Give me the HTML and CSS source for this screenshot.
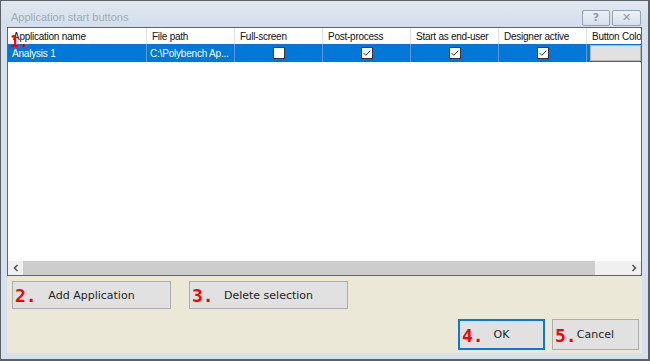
FILE: index.html
```html
<!DOCTYPE html>
<html lang="en">
<head>
    <meta charset="utf-8">
    <title>Application start buttons</title>
    <link rel="stylesheet" href="styles.css">
</head>
<body>
    <div class="window">
        <div class="titlebar">
            <span class="title">Application start buttons</span>
            <div class="caption-buttons">
                <span class="caption-btn">?</span>
                <span class="caption-btn">&#x2715;</span>
            </div>
        </div>
        <div class="client">
            <div class="grid">
                <div class="grid-line grid-header">
                    <div class="cell">Application name</div>
                    <div class="cell">File path</div>
                    <div class="cell">Full-screen</div>
                    <div class="cell">Post-process</div>
                    <div class="cell">Start as end-user</div>
                    <div class="cell">Designer active</div>
                    <div class="cell">Button Color</div>
                </div>
                <div class="grid-line grid-row selected">
                    <div class="cell">Analysis 1</div>
                    <div class="cell">C:\Polybench Ap...</div>
                    <div class="cell check"><span class="checkbox"></span></div>
                    <div class="cell check">
                        <span class="checkbox">
                            <svg viewBox="0 0 12 12" width="10" height="10"><path d="M2 6.2 L4.6 8.8 L10 3.2" fill="none" stroke="#333" stroke-width="1.2"/></svg>
                        </span>
                    </div>
                    <div class="cell check">
                        <span class="checkbox">
                            <svg viewBox="0 0 12 12" width="10" height="10"><path d="M2 6.2 L4.6 8.8 L10 3.2" fill="none" stroke="#333" stroke-width="1.2"/></svg>
                        </span>
                    </div>
                    <div class="cell check">
                        <span class="checkbox">
                            <svg viewBox="0 0 12 12" width="10" height="10"><path d="M2 6.2 L4.6 8.8 L10 3.2" fill="none" stroke="#333" stroke-width="1.2"/></svg>
                        </span>
                    </div>
                    <div class="cell swatch-cell"><span class="swatch"></span></div>
                </div>
                <div class="grid-fill"></div>
                <div class="hscroll">
                    <span class="scroll-arrow">
                        <svg viewBox="0 0 8 8" width="8" height="8"><path d="M5.5 1 L2.5 4 L5.5 7" fill="none" stroke="#555" stroke-width="1.6"/></svg>
                    </span>
                    <span class="scroll-thumb"></span>
                    <span class="scroll-track"></span>
                    <span class="scroll-arrow">
                        <svg viewBox="0 0 8 8" width="8" height="8"><path d="M2.5 1 L5.5 4 L2.5 7" fill="none" stroke="#555" stroke-width="1.6"/></svg>
                    </span>
                </div>
            </div>
            <div class="row-actions">
                <button class="btn wide"><span class="num">2.</span>Add Application</button>
                <button class="btn wide"><span class="num">3.</span>Delete selection</button>
            </div>
            <div class="dialog-actions">
                <button class="btn small focused"><span class="num">4.</span>OK</button>
                <button class="btn small"><span class="num">5.</span>Cancel</button>
            </div>
        </div>
        <span class="marker-one">1.</span>
    </div>
</body>
</html>
```

FILE: styles.css
```css
body {
    margin: 0;
    padding: 0;
    background-color: #ffffff;
}

.window {
    position: relative;
    width: 650px;
    height: 361px;
    box-sizing: border-box;
    border: 1px solid #5c6168;
    border-right-width: 2px;
    border-bottom-width: 2px;
    background-color: #d5e1ef;
    display: flex;
    flex-direction: column;
    font-family: 'Liberation Sans', Arial, sans-serif;
}

.titlebar {
    height: 26px;
    display: flex;
    justify-content: space-between;
    align-items: flex-start;
    padding: 0 7px 0 10px;
    background: linear-gradient(#e1e8f1, #d3deeb);
}

.title {
    font-size: 11px;
    color: #a3abb5;
    margin-top: 10px;
}

.caption-buttons {
    display: flex;
    gap: 2px;
    margin-top: 9px;
}

.caption-btn {
    width: 26px;
    height: 14px;
    border: 1px solid #97a3b2;
    border-radius: 2px;
    background: linear-gradient(#eef2f7, #d6dfea);
    color: #8f9aa7;
    font-family: 'DejaVu Sans', sans-serif;
    font-size: 11px;
    font-weight: 700;
    line-height: 14px;
    text-align: center;
}

.caption-btn + .caption-btn {
    width: 27px;
}

.client {
    flex: 1;
    margin: 0 6px 6px 6px;
    background-color: #ebe8d8;
    display: flex;
    flex-direction: column;
}

.grid {
    height: 249px;
    box-sizing: border-box;
    border: 1px solid #646464;
    background-color: #ffffff;
    display: flex;
    flex-direction: column;
    overflow: hidden;
}

.grid-line {
    display: grid;
    grid-template-columns: 139px 88px 88px 88px 88px 88px 1fr;
}

.cell {
    box-sizing: border-box;
    border-right: 1px solid #e3e3e3;
    white-space: nowrap;
    overflow: hidden;
    display: flex;
    align-items: center;
}

.cell:last-child {
    border-right: none;
}

.grid-header {
    height: 16px;
    font-size: 10px;
    letter-spacing: -0.25px;
    color: #111;
}

.grid-header .cell {
    padding-left: 5px;
}

.grid-row {
    height: 18px;
    font-size: 10px;
    letter-spacing: -0.2px;
}

.grid-row .cell {
    padding-left: 3px;
    border-right-color: #5b9ddb;
}

.grid-row .cell:first-child {
    padding-left: 4px;
}

.selected {
    background-color: #0078d7;
    color: #ffffff;
}

.check {
    justify-content: center;
    padding-left: 0 !important;
}

.checkbox {
    width: 12px;
    height: 12px;
    box-sizing: border-box;
    border: 1px solid #333;
    background-color: #ffffff;
    display: flex;
    align-items: center;
    justify-content: center;
}

.swatch-cell {
    padding: 1px 0 1px 3px !important;
}

.swatch {
    width: 100%;
    height: 16px;
    box-sizing: border-box;
    border: 1px solid #b5b5b5;
    background-color: #e1e1e1;
}

.grid-fill {
    flex: 1;
}

.hscroll {
    height: 14px;
    display: flex;
    background-color: #f0f0f0;
}

.scroll-arrow {
    width: 15px;
    display: flex;
    align-items: center;
    justify-content: center;
}

.scroll-thumb {
    width: 572px;
    background-color: #cdcdcd;
}

.scroll-track {
    flex: 1;
}

.row-actions {
    display: flex;
    gap: 18px;
    margin-top: 5px;
    padding-left: 5px;
}

.dialog-actions {
    display: flex;
    justify-content: flex-end;
    gap: 7px;
    margin-top: auto;
    padding: 0 3px 3px 0;
}

.btn {
    position: relative;
    box-sizing: border-box;
    border: 1px solid #adadad;
    background-color: #e1e1e1;
    color: #1e1e1e;
    font-family: 'DejaVu Sans', Verdana, sans-serif;
    font-size: 11px;
    padding: 0;
    text-align: center;
}

.btn.wide {
    width: 159px;
    height: 28px;
}

.btn.small {
    width: 87px;
    height: 31px;
}

.btn.focused {
    border: 2px solid #0a7ad9;
}

.num {
    position: absolute;
    left: 2px;
    top: 50%;
    transform: translateY(-50%);
    font-family: 'DejaVu Sans Mono', monospace;
    font-size: 18px;
    font-weight: 700;
    color: #ff0000;
}

.marker-one {
    position: absolute;
    left: 9px;
    top: 33px;
    font-family: 'DejaVu Sans Mono', monospace;
    font-size: 16px;
    font-weight: 700;
    line-height: 16px;
    color: #ff0000;
}
```
